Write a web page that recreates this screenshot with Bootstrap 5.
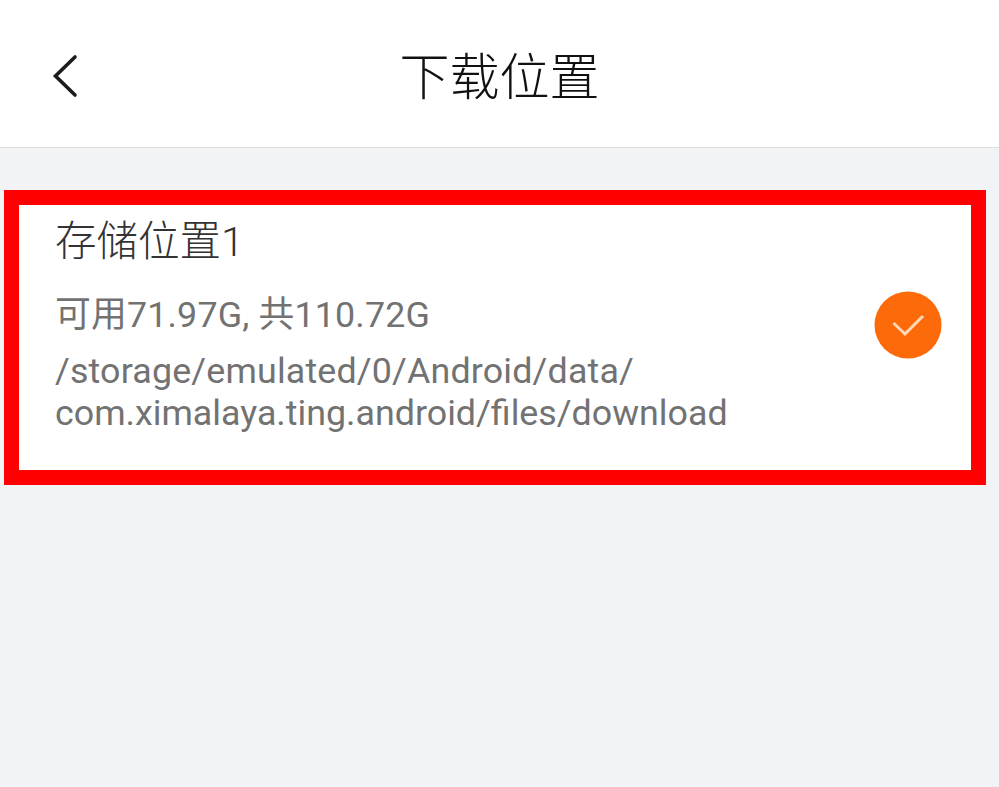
<!DOCTYPE html>
<html lang="zh"><head><meta charset="utf-8">
<link href="https://cdn.jsdelivr.net/npm/bootstrap@5.3.0/dist/css/bootstrap.min.css" rel="stylesheet">
<style>
html,body{height:787px;overflow:hidden}
body{background:#f2f3f5;font-family:Roboto,"Noto Sans CJK SC",sans-serif}
.topbar{height:148px;background:#fff;border-bottom:1px solid #dfdfdf;padding:9px 0 0 52px}
.topbar h1{font-size:50px;font-weight:300;color:#111;margin:0;line-height:1}
.back-ic{width:26px;height:44px;margin-top:-4px}
.title-wrap{margin-left:-78px}
.frame{margin:42px 13px 0 4px;height:295px;border:15px solid #fe0000;background:#fff;padding:0 29px 0 36px}
.name{font-size:41.5px;font-weight:300;line-height:44px;color:#333;margin-top:15px}
.meta{font-size:35.8px;color:#727272}
.space{line-height:44px;margin-top:29px}
.path{line-height:42px;margin-top:13px}
.wider{letter-spacing:.17px}
.tick{width:68px;height:68px;flex:none;margin-bottom:25px}
</style></head><body>
<div class="topbar d-flex align-items-center">
<svg class="back-ic" viewBox="0 0 26 44"><path d="M23 3 3.5 22 23 41" fill="none" stroke="#1c1c1c" stroke-width="3.6" stroke-linecap="round"/></svg>
<div class="flex-grow-1 text-center title-wrap"><h1>下载位置</h1></div>
</div>
<div class="frame d-flex align-items-center justify-content-between">
<div class="align-self-start">
<div class="name">存储位置1</div>
<div class="meta space wider">可用71.97G, 共110.72G</div>
<div class="meta path"><span class="wider">/storage/emulated/0/Android/data/</span><br>com.ximalaya.ting.android/files/download</div>
</div>
<svg class="tick" viewBox="0 0 68 68"><circle cx="34" cy="34" r="33.5" fill="#fd6a0a"/><path d="M19.5 32 31 43 49 25" fill="none" stroke="#ffd9b8" stroke-width="3"/></svg>
</div>
<script src="https://cdn.jsdelivr.net/npm/bootstrap@5.3.0/dist/js/bootstrap.bundle.min.js"></script>
</body></html>
